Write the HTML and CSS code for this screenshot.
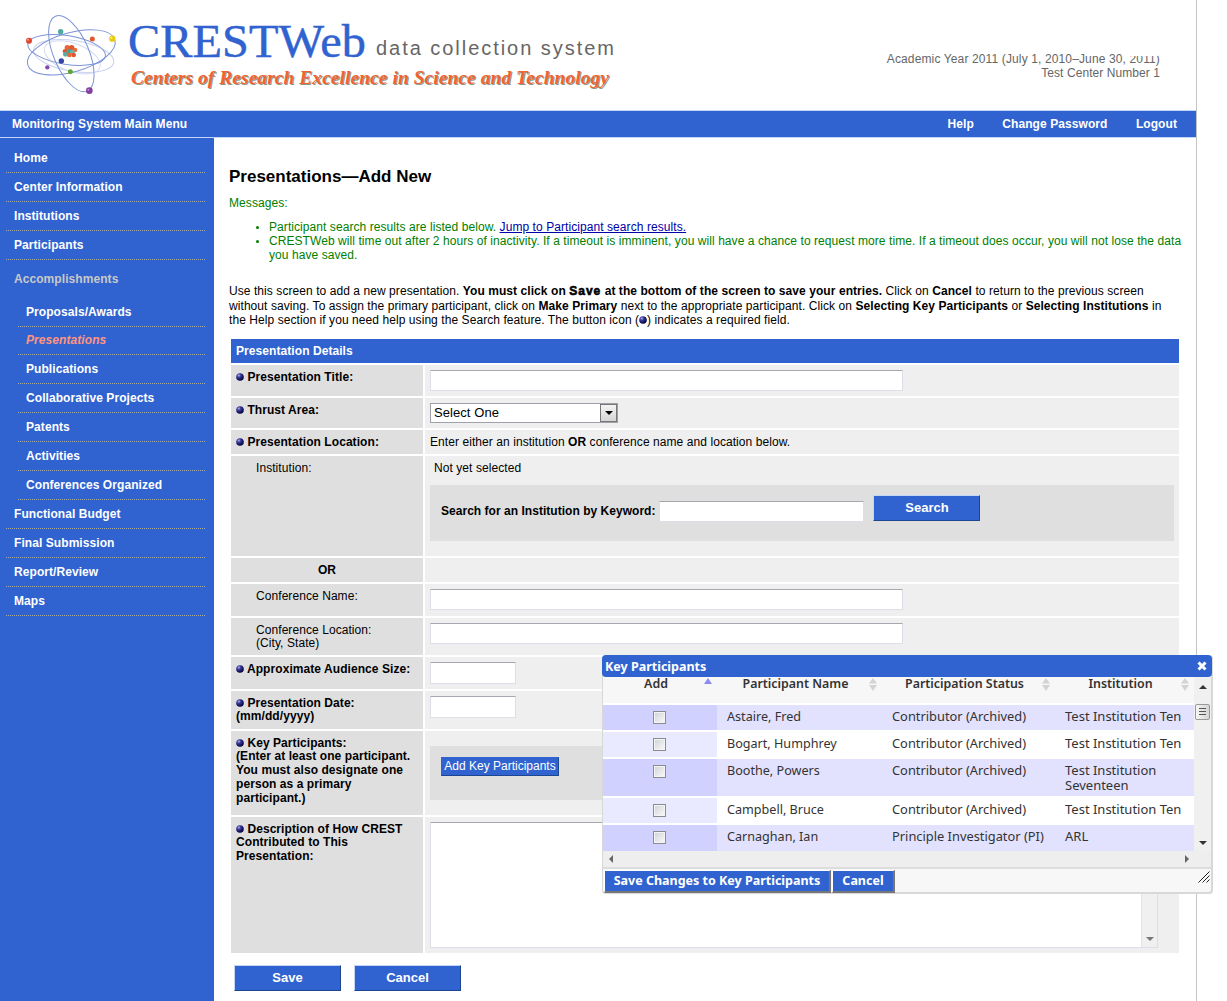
FILE: index.html
```html
<!DOCTYPE html>
<html lang="en">
<head>
	<meta charset="UTF-8">
	<title>CRESTWeb - Presentations</title>
	<link rel="stylesheet" href="styles.css">
</head>
<body>
	<!-- shared icons -->
	<svg width="0" height="0" class="defs">
		<defs>
			<radialGradient id="ball" cx="35%" cy="30%" r="70%">
				<stop offset="0" stop-color="#b4b4e8"/>
				<stop offset="0.35" stop-color="#3a3a9c"/>
				<stop offset="1" stop-color="#00003c"/>
			</radialGradient>
			<symbol id="req" viewBox="0 0 8 8"><circle cx="4" cy="4" r="3.8" fill="url(#ball)"/></symbol>
			<symbol id="sort" viewBox="0 0 8 13"><path d="M4 0L8 5.5H0zM4 13L8 7H0z" fill="#d3d3d3"/></symbol>
		</defs>
	</svg>
	<div class="page">
		<header>
			<svg class="logo" width="640" height="105" viewBox="0 0 640 105">
				<g transform="translate(15 8) scale(0.3333)" fill="none" stroke="#7c93d6" stroke-width="3">
					<ellipse cx="176" cy="144" rx="122" ry="46" transform="rotate(9 176 144)" stroke="#c9d2ef"/>
					<ellipse cx="172" cy="148" rx="88" ry="42" transform="rotate(20 172 148)" stroke="#d4dbf2"/>
					<ellipse cx="155" cy="126" rx="118" ry="43" transform="rotate(9 155 126)"/>
					<ellipse cx="169" cy="133" rx="136" ry="59" transform="rotate(-16 169 133)"/>
					<ellipse cx="169" cy="137" rx="122" ry="53" transform="rotate(67 169 137)"/>
					<g stroke="none">
						<circle cx="42" cy="98" r="9" fill="#e0442c"/>
						<circle cx="137" cy="71" r="8" fill="#4fa89c"/>
						<circle cx="232" cy="93" r="7.500" fill="#e0582f"/>
						<circle cx="292" cy="92" r="9.500" fill="#e8cb12"/>
						<circle cx="139" cy="159" r="8" fill="#3544a4"/>
						<circle cx="97" cy="178" r="6.500" fill="#8347ad"/>
						<circle cx="166" cy="191" r="7.500" fill="#5fa62c"/>
						<circle cx="223" cy="248" r="10" fill="#81409f"/>
						<circle cx="157" cy="119" r="8" fill="#ea6237"/>
						<circle cx="170" cy="119" r="8" fill="#e0572f"/>
						<circle cx="180" cy="126" r="7" fill="#e96a3c"/>
						<circle cx="150" cy="130" r="7" fill="#e0572f"/>
						<circle cx="151" cy="139" r="7" fill="#58aaa0"/>
						<circle cx="163" cy="131" r="8" fill="#4b9f98"/>
						<circle cx="172" cy="133" r="7" fill="#68b5aa"/>
						<circle cx="163" cy="141" r="7" fill="#ea6237"/>
						<circle cx="176" cy="141" r="7" fill="#e0572f"/>
						<circle cx="289" cy="89" r="3" fill="#fff4a0"/>
						<circle cx="39" cy="95" r="3" fill="#ffa090"/>
						<circle cx="220" cy="245" r="3" fill="#bf8dd2"/>
					</g>
				</g>
				<text class="brand" x="128" y="57" textLength="238" lengthAdjust="spacingAndGlyphs">CRESTWeb</text>
				<text class="system" x="376" y="55" textLength="238">data collection system</text>
				<text class="tagline" x="131" y="83.500" textLength="478" lengthAdjust="spacingAndGlyphs">Centers of Research Excellence in Science and Technology</text>
			</svg>
			<div class="center-info">
				<span class="year">Academic Year 2011 (July 1, 2010–June 30, <span class="cut">2011</span>)</span><br>
				Test Center Number 1
			</div>
		</header>
		<nav class="topbar">
			<a class="main-menu">Monitoring System Main Menu</a>
			<a>Help</a>
			<a>Change Password</a>
			<a>Logout</a>
		</nav>
		<div class="columns">
			<ul class="sidebar">
				<li>Home</li>
				<li>Center Information</li>
				<li>Institutions</li>
				<li>Participants</li>
				<li class="open">Accomplishments</li>
				<li class="sub">Proposals/Awards</li>
				<li class="sub current">Presentations</li>
				<li class="sub">Publications</li>
				<li class="sub">Collaborative Projects</li>
				<li class="sub">Patents</li>
				<li class="sub">Activities</li>
				<li class="sub">Conferences Organized</li>
				<li>Functional Budget</li>
				<li>Final Submission</li>
				<li>Report/Review</li>
				<li>Maps</li>
			</ul>
			<main>
				<h1>Presentations—Add New</h1>
				<div class="messages">
					Messages:
					<ul>
						<li>Participant search results are listed below. <a href="#results">Jump to Participant search results.</a></li>
						<li>CRESTWeb will time out after 2 hours of inactivity. If a timeout is imminent, you will have a chance to request more time. If a timeout does occur, you will not lose the data<br>you have saved.</li>
					</ul>
				</div>
				<p class="intro">
					Use this screen to add a new presentation. <b>You must click on <b class="heavy">Save</b> at the bottom of the screen to save your entries.</b> Click on <b>Cancel</b> to return to the previous screen<br>
					without saving. To assign the primary participant, click on <b>Make Primary</b> next to the appropriate participant. Click on <b>Selecting Key Participants</b> or <b>Selecting Institutions</b> in<br>
					the Help section if you need help using the Search feature. The button icon (<svg class="req"><use href="#req"/></svg>) indicates a required field.
				</p>
				<table class="details">
					<colgroup><col class="c-label"><col></colgroup>
					<tr class="r-head"><th colspan="2">Presentation Details</th></tr>
					<tr class="r-title">
						<td class="label"><svg class="req"><use href="#req"/></svg> Presentation Title:</td>
						<td><input type="text" class="wide"></td>
					</tr>
					<tr class="r-thrust">
						<td class="label"><svg class="req"><use href="#req"/></svg> Thrust Area:</td>
						<td>
							<div class="select"><span>Select One</span><i><svg width="8" height="4"><path d="M0 0h8L4 4z"/></svg></i></div>
						</td>
					</tr>
					<tr class="r-location">
						<td class="label"><svg class="req"><use href="#req"/></svg> Presentation Location:</td>
						<td>Enter either an institution <b>OR</b> conference name and location below.</td>
					</tr>
					<tr class="r-inst">
						<td class="label plain">Institution:</td>
						<td>
							<div class="chosen">Not yet selected</div>
							<div class="search">
								<b>Search for an Institution by Keyword:</b>
								<input type="text">
								<button class="btn">Search</button>
							</div>
						</td>
					</tr>
					<tr class="r-or"><td class="label or">OR</td><td></td></tr>
					<tr class="r-conf">
						<td class="label plain">Conference Name:</td>
						<td><input type="text" class="wide"></td>
					</tr>
					<tr class="r-confloc">
						<td class="label plain">Conference Location:<br>(City, State)</td>
						<td><input type="text" class="wide"></td>
					</tr>
					<tr class="r-size">
						<td class="label"><svg class="req"><use href="#req"/></svg> Approximate Audience Size:</td>
						<td><input type="text" class="short"></td>
					</tr>
					<tr class="r-date">
						<td class="label"><svg class="req"><use href="#req"/></svg> Presentation Date:<br>(mm/dd/yyyy)</td>
						<td><input type="text" class="short"></td>
					</tr>
					<tr class="r-key">
						<td class="label"><svg class="req"><use href="#req"/></svg> Key Participants:<br>(Enter at least one participant.<br>You must also designate one<br>person as a primary<br>participant.)</td>
						<td><div class="keybox"><button class="add">Add Key Participants</button></div></td>
					</tr>
					<tr class="r-desc">
						<td class="label"><svg class="req"><use href="#req"/></svg> Description of How CREST<br>Contributed to This<br>Presentation:</td>
						<td>
							<div class="textarea"><span class="scroll"><svg width="8" height="4"><path d="M0 0h8L4 4z" fill="#777"/></svg></span></div>
						</td>
					</tr>
				</table>
				<div class="actions">
					<button class="btn">Save</button>
					<button class="btn">Cancel</button>
				</div>
			</main>
		</div>
	</div>

	<section class="dialog" id="results">
		<div class="dialog-title">
			<span>Key Participants</span>
			<svg width="10" height="10" viewBox="0 0 10 10"><path d="M1.500 1.500l7 7M8.500 1.500l-7 7" stroke="#fff" stroke-width="3"/></svg>
		</div>
		<div class="dialog-body">
			<table class="people">
				<tr>
					<th>Add<svg class="asc" width="8" height="6"><path d="M4 0L8 6H0z" fill="#8c8cf0"/></svg></th>
					<th>Participant Name<svg class="sort"><use href="#sort"/></svg></th>
					<th>Participation Status<svg class="sort"><use href="#sort"/></svg></th>
					<th>Institution<svg class="sort"><use href="#sort"/></svg></th>
				</tr>
				<tr class="odd"><td><i class="check"></i></td><td>Astaire, Fred</td><td>Contributor (Archived)</td><td>Test Institution Ten</td></tr>
				<tr><td><i class="check"></i></td><td>Bogart, Humphrey</td><td>Contributor (Archived)</td><td>Test Institution Ten</td></tr>
				<tr class="odd tall"><td><i class="check"></i></td><td>Boothe, Powers</td><td>Contributor (Archived)</td><td>Test Institution<br>Seventeen</td></tr>
				<tr><td><i class="check"></i></td><td>Campbell, Bruce</td><td>Contributor (Archived)</td><td>Test Institution Ten</td></tr>
				<tr class="odd"><td><i class="check"></i></td><td>Carnaghan, Ian</td><td>Principle Investigator (PI)</td><td>ARL</td></tr>
			</table>
			<div class="vscroll">
				<svg width="8" height="4"><path d="M4 0L8 4H0z" fill="#333"/></svg>
				<i class="thumb"></i>
				<svg width="8" height="4" class="down"><path d="M0 0h8L4 4z" fill="#333"/></svg>
			</div>
		</div>
		<div class="hscroll">
			<svg width="4" height="8"><path d="M4 0v8L0 4z" fill="#666"/></svg>
			<svg width="4" height="8"><path d="M0 0v8l4-4z" fill="#666"/></svg>
		</div>
		<div class="dialog-foot">
			<button>Save Changes to Key Participants</button>
			<button>Cancel</button>
			<svg width="12" height="12" viewBox="0 0 12 12"><path d="M0.500 11.500l11-11M4.500 11.500l7-7M8.500 11.500l3-3" stroke="#222" fill="none"/></svg>
		</div>
	</section>
</body>
</html>
```
FILE: styles.css
```css
* {
	box-sizing: border-box;
}
body {
	background: #fff;
	color: #000;
	font: 12px/14px "Liberation Sans", Arial, sans-serif;
	height: 1001px;
	letter-spacing: 0.07px;
	margin: 0;
	overflow: hidden;
	position: relative;
	white-space: nowrap;
}
button, input {
	font-family: inherit;
	margin: 0;
}
svg.defs {
	position: absolute;
}
.page {
	border-right: 1px solid #c4c4c4;
	display: flex;
	flex-direction: column;
	height: 1001px;
	width: 1197px;
}

/* header */
header {
	display: flex;
	height: 110px;
	justify-content: space-between;
}
.logo .brand {
	fill: #3063cf;
	font: 47px "Liberation Serif", serif;
	stroke: #3063cf;
	stroke-width: 0.5px;
}
.logo .system {
	fill: #666;
	font: 20px "Liberation Sans", sans-serif;
}
.logo .tagline {
	fill: #f2632f;
	font: italic bold 18.500px "Liberation Serif", serif;
	text-shadow: 1px 1px 0 #8c9a8c;
}
.center-info {
	color: #666;
	padding: 52px 36px 0 0;
	text-align: right;
}
.center-info .year {
	letter-spacing: 0.13px;
}
.center-info .cut {
	position: relative;
}
/* white patch that hides the upper part of the year */
.center-info .cut:after {
	background: #fff;
	content: "";
	height: 4px;
	left: 0;
	position: absolute;
	top: 0;
	width: 28px;
}

.topbar {
	background: #3063cf;
	border-bottom: 1px solid #c3d6f5;
	border-top: 1px solid #c3d6f5;
	color: #fff;
	display: flex;
	font-weight: bold;
	gap: 28.500px;
	height: 28px;
	line-height: 26px;
	padding: 0 19px 0 12px;
}
.topbar .main-menu {
	flex: 1;
}

.columns {
	display: flex;
	flex: 1;
}
.sidebar {
	background: #3063cf;
	color: #fff;
	font-weight: bold;
	list-style: none;
	margin: 0;
	padding: 6px 9px 0 6px;
	width: 214px;
}
.sidebar li {
	border-bottom: 1px dotted #a9ae9c;
	height: 29px;
	line-height: 28px;
	padding-left: 8px;
}
.sidebar li.sub {
	margin-left: 12px;
}
.sidebar li.open {
	border: none;
	color: #c8c8c8;
	height: 38px;
	line-height: 38px;
}
.sidebar li.current {
	color: #ff9580;
	font-style: italic;
	height: 28px;
	line-height: 27px;
}

/* content */
main {
	padding: 29px 0 0 15px;
}
h1 {
	font-size: 17px;
	letter-spacing: 0;
	line-height: 20px;
	margin: 0 0 9px;
}
.messages {
	color: #008000;
}
.messages ul {
	margin: 10px 0 0;
	padding: 0 0 0 40px;
}
.messages li::marker {
	font-size: 10px;
}
.messages a {
	color: #0000a8;
}
.intro {
	line-height: 14.500px;
	margin: 22px 0 9px;
}
.intro .heavy {
	-webkit-text-stroke: 0.6px #000;
	letter-spacing: 1px;
}
svg.req {
	height: 8px;
	width: 8px;
}

.details {
	border-spacing: 2px;
	table-layout: fixed;
	width: 952px;
}
.details .c-label {
	width: 192px;
}
.details th {
	background: #3063cf;
	color: #fff;
	padding: 0 5px;
	text-align: left;
}
.details td {
	background: #efefef;
	padding: 5px 5px 0;
	vertical-align: top;
}
.details td.label {
	background: #dfdfdf;
	font-weight: bold;
	line-height: 13.750px;
	padding-top: 6px;
}
.details td.plain {
	font-weight: normal;
	padding-left: 25px;
}
.details td.or {
	text-align: center;
}
.r-head { height: 24px; }
.r-title { height: 31px; }
.r-thrust { height: 30px; }
.r-location { height: 24px; }
.r-inst { height: 100px; }
.r-or { height: 24px; }
.r-conf { height: 32px; }
.r-confloc { height: 37px; }
.r-size { height: 32px; }
.r-date { height: 38px; }
.r-key { height: 84px; }
.r-desc { height: 136px; }

.details input, .textarea {
	background: #fff;
	border: 1px solid #dcdfe6;
	border-top-color: #a5a9af;
	display: block;
	height: 21px;
	padding: 0 3px;
}
.details input.wide {
	width: 473px;
}
.details input.short {
	height: 22px;
	width: 86px;
}
.select {
	align-items: center;
	background: #fff;
	border: 1px solid #a0a0a8;
	display: flex;
	font-size: 13px;
	height: 20px;
	justify-content: space-between;
	padding-left: 3px;
	width: 188px;
}
.select i {
	align-items: center;
	background: linear-gradient(#f4f4f4, #d4d4d4);
	border: 1px solid #777;
	display: flex;
	height: 18px;
	justify-content: center;
	width: 17px;
}
.chosen {
	padding-left: 4px;
}
.search {
	align-items: center;
	background: #dfdfdf;
	display: flex;
	height: 56px;
	margin-top: 10px;
	padding: 0 11px 3px;
}
.search b {
	letter-spacing: 0.03px;
}
.search input {
	margin: 0 9px 0 4px;
	width: 205px;
}
.btn {
	background: #3063cf;
	border: 1px solid #c3d6f5;
	border-bottom-color: #1c4690;
	border-right-color: #1c4690;
	color: #fff;
	font-size: 13px;
	font-weight: bold;
	height: 26px;
	padding: 0 0 1px;
	width: 107px;
}
.search .btn {
	margin-bottom: 7px;
}
.keybox {
	background: #dfdfdf;
	height: 54px;
	margin-top: 10px;
	padding: 11px;
}
.add {
	background: #3063cf;
	border: 1px solid #3063cf;
	border-bottom-color: #1c4690;
	border-right-color: #1c4690;
	color: #fff;
	display: block;
	font-size: 12px;
	height: 19px;
	padding: 0;
	width: 118px;
}
.textarea {
	display: flex;
	height: 126px;
	justify-content: flex-end;
	padding: 0;
	width: 728px;
}
.textarea .scroll {
	align-items: flex-end;
	background: #f0f0f0;
	border-left: 1px solid #e2e2e2;
	display: flex;
	justify-content: center;
	padding-bottom: 6px;
	width: 16px;
}
.actions {
	display: flex;
	gap: 13px;
	padding: 10px 0 0 5px;
}

/* key participants dialog */
.dialog {
	background: #f7f7f7;
	border: 1px solid #d8d8d8;
	border-radius: 4px;
	border-width: 0 2px 2px 1px;
	color: #333;
	font: 13px/15px "Noto Sans", sans-serif;
	height: 239px;
	left: 602px;
	letter-spacing: 0;
	position: absolute;
	top: 655px;
	width: 611px;
}
.dialog-title {
	align-items: center;
	background: #3063cf;
	border-radius: 4px;
	color: #fff;
	display: flex;
	font-size: 12.500px;
	font-weight: bold;
	height: 22px;
	justify-content: space-between;
	margin: 0 -1px;
	padding: 0 5px 0 3px;
}
.dialog-body {
	display: flex;
	height: 174px;
	overflow: hidden;
}
.people {
	border-collapse: collapse;
	height: 174px;
	table-layout: fixed;
	width: 591px;
}
.people th {
	font-size: 12.400px;
	font-weight: 600;
	height: 27px;
	line-height: 13px;
	padding: 0;
	position: relative;
	vertical-align: top;
}
.people th:nth-child(1) { padding-right: 8px; width: 114px; }
.people th:nth-child(2) { padding-right: 8px; width: 165px; }
.people th:nth-child(3) { padding-right: 8px; width: 173px; }
.people th:nth-child(4) { padding-right: 8px; }
.people td {
	background: #fff;
	border-top: 2px solid #fff;
	height: 27px;
	padding: 4px 0 0 10px;
	vertical-align: top;
}
.people td:nth-child(2) {
	font-size: 12.600px;
}
.people td:nth-child(3) {
	font-size: 12.850px;
}
.people td:first-child {
	background: #e9e9ff;
	padding: 6px 0 0 50px;
}
.people .odd td {
	background: #e2e2ff;
}
.people .odd td:first-child {
	background: #d1d1ff;
}
.people .tall td {
	height: 39px;
}
.people th svg {
	position: absolute;
	right: 5px;
	top: 1px;
}
.people th .sort {
	height: 13px;
	width: 8px;
}
.check {
	background: linear-gradient(135deg, #cfd2d6, #fafafa);
	border: 1px solid #8c8c8c;
	box-shadow: inset 0 0 0 1px #f4f4f4;
	display: block;
	height: 13px;
	width: 13px;
}
.vscroll {
	align-items: center;
	background: #f0f0f0;
	display: flex;
	flex: 1;
	flex-direction: column;
	padding: 8px 0 6px;
}
.vscroll .thumb {
	background: repeating-linear-gradient(#555 0 1px, transparent 1px 3px) center / 7px 8px no-repeat, linear-gradient(90deg, #f6f6f6, #d4d4d4);
	border: 1px solid #999;
	border-radius: 2px;
	height: 16px;
	margin-top: 15px;
	width: 15px;
}
.vscroll .down {
	margin-top: auto;
}
.hscroll {
	align-items: center;
	background: #eee;
	border-bottom: 2px solid #ddd;
	display: flex;
	height: 18px;
	justify-content: space-between;
	padding: 0 22px 0 6px;
}
.dialog-foot {
	align-items: flex-start;
	display: flex;
	padding: 1px 1px 0;
}
.dialog-foot button {
	background: #3063cf;
	border: 1px solid #fff;
	border-bottom: 2px solid #777;
	border-right: 2px solid #777;
	color: #fff;
	font-size: 12.500px;
	font-weight: bold;
	height: 23px;
	line-height: 18px;
	padding: 0;
	width: 227px;
}
.dialog-foot button + button {
	margin-left: 1px;
	width: 63px;
}
.dialog-foot svg {
	margin: 1px 0 0 auto;
}
```
